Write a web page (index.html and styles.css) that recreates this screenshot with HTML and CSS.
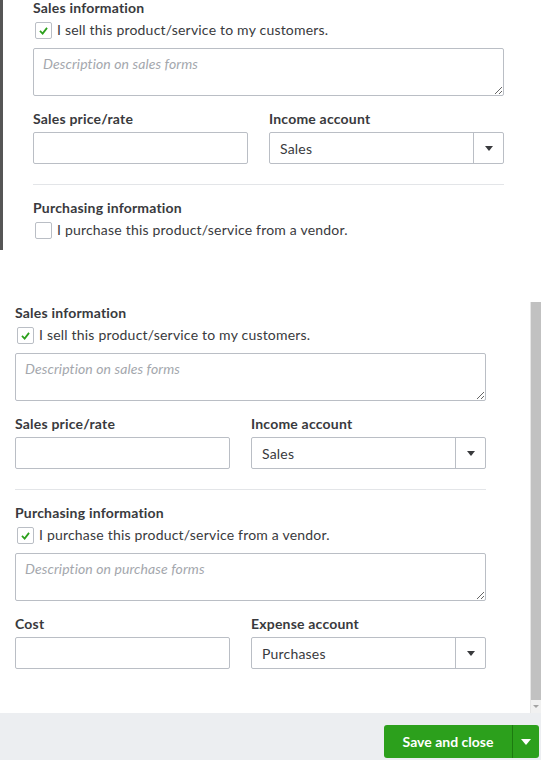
FILE: index.html
```html
<!DOCTYPE html>
<html lang="en">
<head>
    <meta charset="UTF-8">
    <meta name="viewport" content="width=device-width, initial-scale=1.0">
    <title>Product/Service information</title>
    <link rel="stylesheet" href="styles.css">
</head>
<body>

<!-- Collapsed state: purchasing not ticked yet -->
<div class="panel panel-top">
    <div class="form">
        <h3 class="section-title">Sales information</h3>
        <label class="check">
            <span class="box"><svg viewBox="0 0 17 17"><polyline points="4.5,9 7.5,12 12.5,5.5"/></svg></span>
            I sell this product/service to my customers.
        </label>
        <textarea class="desc" placeholder="Description on sales forms"></textarea>

        <div class="row">
            <div class="field">
                <label class="field-label" for="price_top">Sales price/rate</label>
                <input class="text-input" type="text" id="price_top">
            </div>
            <div class="field">
                <label class="field-label">Income account</label>
                <div class="select">
                    <span class="select-value">Sales</span>
                    <span class="select-arrow"></span>
                </div>
            </div>
        </div>

        <hr class="divider">

        <h3 class="section-title">Purchasing information</h3>
        <label class="check">
            <span class="box"></span>
            I purchase this product/service from a vendor.
        </label>
    </div>
</div>

<!-- Expanded state with footer -->
<div class="panel panel-bottom">
    <div class="scroll-area">
        <div class="form">
            <h3 class="section-title">Sales information</h3>
            <label class="check">
                <span class="box"><svg viewBox="0 0 17 17"><polyline points="4.5,9 7.5,12 12.5,5.5"/></svg></span>
                I sell this product/service to my customers.
            </label>
            <textarea class="desc" placeholder="Description on sales forms"></textarea>

            <div class="row">
                <div class="field">
                    <label class="field-label" for="price">Sales price/rate</label>
                    <input class="text-input" type="text" id="price">
                </div>
                <div class="field">
                    <label class="field-label">Income account</label>
                    <div class="select">
                        <span class="select-value">Sales</span>
                        <span class="select-arrow"></span>
                    </div>
                </div>
            </div>

            <hr class="divider">

            <h3 class="section-title">Purchasing information</h3>
            <label class="check">
                <span class="box"><svg viewBox="0 0 17 17"><polyline points="4.5,9 7.5,12 12.5,5.5"/></svg></span>
                I purchase this product/service from a vendor.
            </label>
            <textarea class="desc" placeholder="Description on purchase forms"></textarea>

            <div class="row row-tight">
                <div class="field">
                    <label class="field-label" for="cost">Cost</label>
                    <input class="text-input" type="text" id="cost">
                </div>
                <div class="field">
                    <label class="field-label">Expense account</label>
                    <div class="select">
                        <span class="select-value">Purchases</span>
                        <span class="select-arrow"></span>
                    </div>
                </div>
            </div>
        </div>

        <div class="scrollbar">
            <div class="thumb"></div>
            <div class="scroll-down"></div>
        </div>
    </div>

    <div class="footer">
        <div class="split-button">
            <button type="button" class="btn-main">Save and close</button>
            <button type="button" class="btn-more"><span class="caret"></span></button>
        </div>
    </div>
</div>

</body>
</html>
```

FILE: styles.css
```css
body {
    font-family: Lato, "Open Sans", Arial, sans-serif;
    font-size: 14px;
    letter-spacing: 0.2px;
    color: #393a3d;
    margin: 0;
    padding: 0;
    background: #fff;
    width: 541px;
}
.panel {
    box-sizing: border-box;
    width: 541px;
}
.panel-top {
    height: 250px;
    border-left: 3px solid #565656;
    padding-left: 30px;
}
.panel-bottom {
    margin-top: 52px;
    height: 458px;
    display: flex;
    flex-direction: column;
}
.scroll-area {
    flex: 1;
    display: flex;
}
.panel-bottom .form {
    padding: 3px 0 0 15px;
}
.form {
    width: 471px;
    display: flex;
    flex-direction: column;
}
.section-title {
    margin: 0;
    font-size: 14px;
    line-height: 16px;
    font-weight: 700;
}
.check {
    display: flex;
    align-items: center;
    gap: 5px;
    height: 18px;
    margin-top: 5px;
    margin-bottom: 1px;
    line-height: 18px;
}
.box {
    width: 15px;
    height: 15px;
    margin-left: 2px;
    border: 1px solid #babec5;
    border-radius: 2px;
    background: #fff;
    display: flex;
}
.box svg {
    width: 15px;
    height: 15px;
}
.box polyline {
    fill: none;
    stroke: #2ca01c;
    stroke-width: 2;
}
.desc {
    display: block;
    box-sizing: border-box;
    width: 471px;
    height: 48px;
    margin: 8px 0 0;
    padding: 6px 9px;
    border: 1px solid #babec5;
    border-radius: 2px;
    resize: vertical;
    font-family: inherit;
    font-size: 14px;
    letter-spacing: 0.1px;
    color: #393a3d;
}
.desc::placeholder {
    color: #a4a7ad;
    font-style: italic;
}
.row {
    display: grid;
    grid-template-columns: 215px 1fr;
    column-gap: 21px;
    margin-top: 15px;
}
.row-tight {
    margin-top: 15px;
}
.field {
    display: flex;
    flex-direction: column;
}
.field-label {
    font-weight: 700;
    line-height: 16px;
    margin-bottom: 5px;
}
.text-input {
    box-sizing: border-box;
    height: 32px;
    width: 100%;
    margin: 0;
    border: 1px solid #babec5;
    border-radius: 2px;
    padding: 0 10px;
    font-family: inherit;
    font-size: 14px;
}
.select {
    box-sizing: border-box;
    height: 32px;
    border: 1px solid #babec5;
    border-radius: 2px;
    display: flex;
    align-items: center;
}
.select-value {
    flex: 1;
    padding-left: 10px;
}
.select-arrow {
    width: 29px;
    height: 100%;
    border-left: 1px solid #babec5;
    display: flex;
    align-items: center;
    justify-content: center;
}
.select-arrow::after {
    content: "";
    border-left: 4px solid transparent;
    border-right: 4px solid transparent;
    border-top: 5px solid #393a3d;
}
.divider {
    width: 471px;
    margin: 20px 0 15px;
    border: 0;
    border-top: 1px solid #e3e5e8;
}
.scrollbar {
    margin-left: auto;
    width: 10px;
    display: flex;
    flex-direction: column;
    background: #f1f1f1;
    border-left: 1px solid #e6e6e6;
}
.thumb {
    flex: 1;
    background: #c1c1c1;
}
.scroll-down {
    height: 13px;
    display: flex;
    justify-content: center;
    align-items: center;
}
.scroll-down::after {
    content: "";
    border-left: 3px solid transparent;
    border-right: 3px solid transparent;
    border-top: 3px solid #a3a3a3;
}
.footer {
    height: 47px;
    background: #eceef1;
    display: flex;
    justify-content: flex-end;
    align-items: flex-start;
    padding: 12px 2px 0 0;
    box-sizing: border-box;
}
.split-button {
    display: flex;
    height: 33px;
    border-radius: 3px;
    overflow: hidden;
}
.split-button button {
    border: none;
    background: #2ca01c;
    color: #fff;
    font-family: inherit;
    cursor: pointer;
}
.btn-main {
    width: 128px;
    font-size: 14px;
    font-weight: 700;
    letter-spacing: 0;
}
.btn-more {
    width: 27px;
    border-left: 1px solid #1c7a10 !important;
    display: flex;
    align-items: center;
    justify-content: center;
}
.caret {
    border-left: 5px solid transparent;
    border-right: 5px solid transparent;
    border-top: 6px solid #fff;
}
```
